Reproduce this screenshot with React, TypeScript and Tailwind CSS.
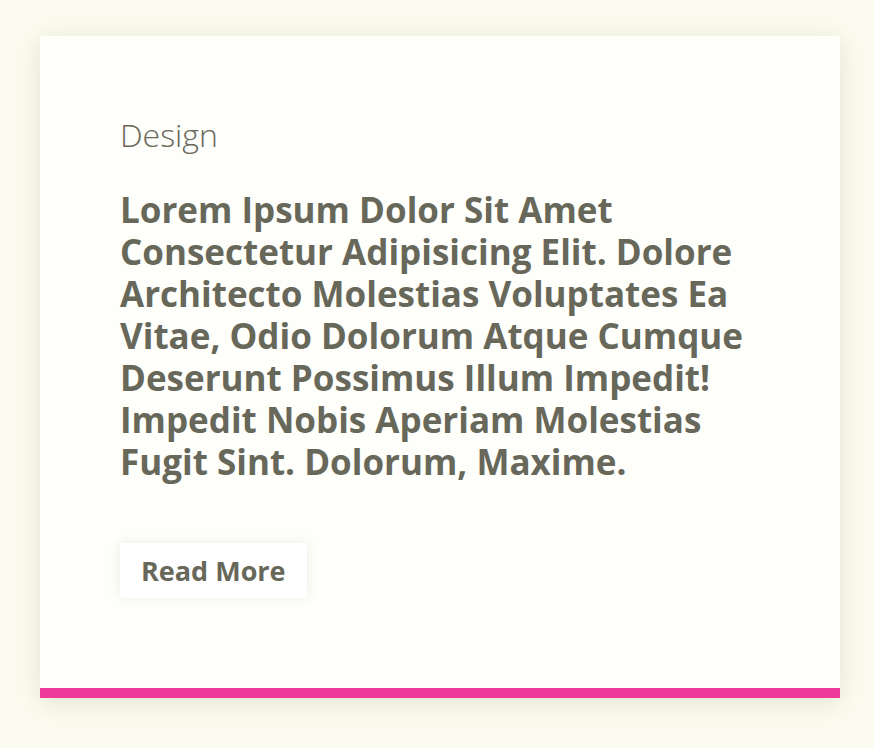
const App = () => {
	return (
		<div className="min-h-screen bg-[#fbfbef] px-10 pt-9 pb-12 font-['Open_Sans','Inter',sans-serif] text-[#67675a]">
			<div className="w-[800px] bg-[#fefefa] shadow-[0_4px_24px_rgba(120,120,90,0.18)] border-b-[10px] border-[#ef3a9a] px-20 pt-[78px] pb-[90px]">
				<p className="text-[32px] font-light leading-[42px]">Design</p>
				<h2 className="mt-[33px] text-[35px] font-bold leading-[42px]">
					Lorem Ipsum Dolor Sit Amet
					<br />
					Consectetur Adipisicing Elit. Dolore
					<br />
					Architecto Molestias Voluptates Ea
					<br />
					Vitae, Odio Dolorum Atque Cumque
					<br />
					Deserunt Possimus Illum Impedit!
					<br />
					Impedit Nobis Aperiam Molestias
					<br />
					Fugit Sint. Dolorum, Maxime.
				</h2>
				<button className="mt-[60px] bg-white px-[21px] py-[13px] text-[27px] font-bold leading-[29px] shadow-[0_0_10px_rgba(120,120,90,0.12)]">
					Read More
				</button>
			</div>
		</div>
	);
};

export default App;
